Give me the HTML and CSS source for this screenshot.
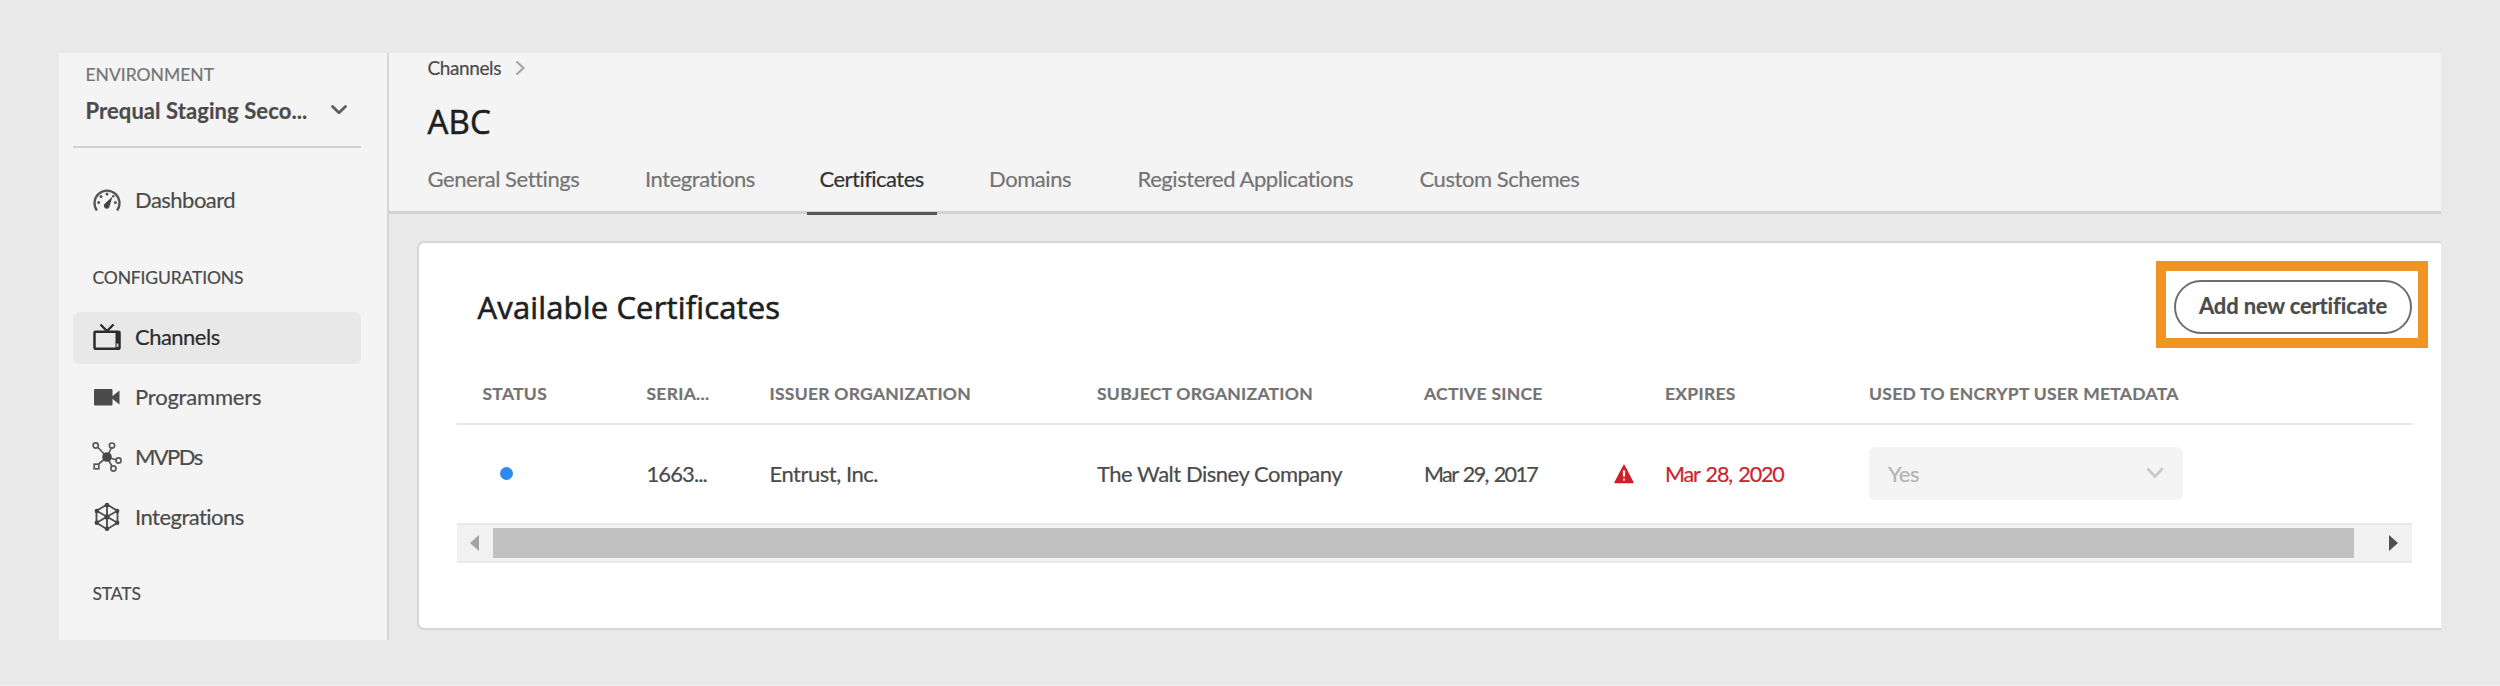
FILE: index.html
```html
<!DOCTYPE html>
<html lang="en">
<head>
<meta charset="utf-8">
<title>Certificates</title>
<link rel="stylesheet" href="styles.css">
</head>
<body>
<div class="app">
  <aside class="sidebar">
    <div class="env">
      <div class="env-label">ENVIRONMENT</div>
      <div class="env-select">
        <span class="env-name">Prequal Staging Seco...</span>
        <svg class="env-chevron" width="18" height="12" viewBox="0 0 18 12"><path d="M2.500 2.500 9 8.800 15.500 2.500" fill="none" stroke="#5c5c5c" stroke-width="2.800" stroke-linecap="round" stroke-linejoin="round"/></svg>
      </div>
    </div>
    <nav class="nav">
      <a class="item dashboard">
        <svg class="icon" width="30" height="30" viewBox="0 0 30 30"><path d="M4.900 25.500A12.500 12.500 0 1 1 25.100 25.500" fill="none" stroke="#555" stroke-width="2.300"/><path d="M20.500 11.500 17.600 21.300A2.900 2.900 0 1 1 13 18.500Z" fill="#444"/><g fill="#555"><circle cx="15" cy="9" r="1.500"/><circle cx="9" cy="11.500" r="1.500"/><circle cx="6.600" cy="17.500" r="1.500"/><circle cx="23.400" cy="17.500" r="1.500"/><circle cx="21.300" cy="11.200" r="1.300"/></g></svg>
        <span>Dashboard</span>
      </a>
      <div class="group configurations">CONFIGURATIONS</div>
      <a class="item active">
        <svg class="icon" width="30" height="30" viewBox="0 0 30 30"><path d="M8.500 2.500 15 9l6.500-6.500" fill="none" stroke="#2c2c2c" stroke-width="2.300"/><rect x="2.500" y="9.800" width="25" height="17" rx="1" fill="none" stroke="#2c2c2c" stroke-width="2.500"/><path d="M23.500 9.500H28v18h-4.500z" fill="#2c2c2c"/><path d="M24.600 21.500h1.800v3.500h-1.800z" fill="#d8d8d8"/></svg>
        <span>Channels</span>
      </a>
      <a class="item programmers">
        <svg class="icon" width="30" height="30" viewBox="0 0 30 30"><rect x="2" y="7" width="18.500" height="16.500" rx="1" fill="#4b4b4b"/><path d="M20 14.500 27.500 8.500V22.500L20 16.500Z" fill="#4b4b4b"/></svg>
        <span>Programmers</span>
      </a>
      <a class="item mvpds">
        <svg class="icon" width="30" height="30" viewBox="0 0 30 30"><g fill="none" stroke="#5a5a5a" stroke-width="1.700"><path d="M15 15 5.500 5M15 15 19.300 6M15 15 24.500 18M15 15 6 22.500M15 15 20 24.500"/><g fill="#f4f4f4"><circle cx="3.700" cy="3.500" r="2.600"/><circle cx="20" cy="3.600" r="2.600"/><circle cx="26.500" cy="18.500" r="2.600"/><circle cx="21.400" cy="26.500" r="2.600"/><rect x="2.200" y="22.200" width="4.600" height="4.600"/></g></g><circle cx="15" cy="15" r="4.800" fill="#484848"/></svg>
        <span>MVPDs</span>
      </a>
      <a class="item integrations">
        <svg class="icon" width="30" height="30" viewBox="0 0 30 30"><path d="M15 2.500 25.500 8.800V20.800L15 27.200 4.500 20.800V8.800ZM15 2.500V27.200M4.500 8.800 25.500 20.800M25.500 8.800 4.500 20.800" fill="none" stroke="#505050" stroke-width="1.900"/><g fill="#444"><circle cx="15" cy="3" r="2.300"/><circle cx="25.200" cy="9" r="2.200"/><circle cx="25.200" cy="20.700" r="2.200"/><circle cx="15" cy="26.800" r="2.300"/><circle cx="4.800" cy="20.700" r="2.200"/><circle cx="4.800" cy="9" r="2.200"/><circle cx="15" cy="14.900" r="2.600"/></g></svg>
        <span>Integrations</span>
      </a>
      <div class="group stats">STATS</div>
      <a class="item clipped">
        <svg width="30" height="30" viewBox="0 0 30 30"><circle cx="23.500" cy="4" r="4" fill="#aaa"/></svg>
      </a>
    </nav>
  </aside>

  <main class="main">
    <header class="header">
      <div class="crumbs">
        <span>Channels</span>
        <svg width="11" height="16" viewBox="0 0 11 16"><path d="M2 2 8.500 8 2 14" fill="none" stroke="#a6a6a6" stroke-width="2.200" stroke-linecap="round"/></svg>
      </div>
      <h1 class="title">ABC</h1>
      <div class="tabs">
        <a class="tab">General Settings</a>
        <a class="tab">Integrations</a>
        <a class="tab selected">Certificates</a>
        <a class="tab">Domains</a>
        <a class="tab">Registered Applications</a>
        <a class="tab">Custom Schemes</a>
      </div>
    </header>

    <section class="card">
      <div class="card-head">
        <h2 class="card-title">Available Certificates</h2>
        <div class="add-wrap">
          <button class="add">Add new certificate</button>
          <div class="highlight"></div>
        </div>
      </div>
      <div class="table">
        <div class="row head">
          <span>STATUS</span><span>SERIA...</span><span>ISSUER ORGANIZATION</span><span>SUBJECT ORGANIZATION</span><span>ACTIVE SINCE</span><span></span><span>EXPIRES</span><span>USED TO ENCRYPT USER METADATA</span>
        </div>
        <div class="row body">
          <span class="dot"></span>
          <span class="serial">1663...</span>
          <span>Entrust, Inc.</span>
          <span>The Walt Disney Company</span>
          <span class="date">Mar 29, 2017</span>
          <svg class="warning" width="20" height="20" viewBox="0 0 20 20"><path d="M10 1.300 19 18.500H1Z" fill="#cb2129" stroke="#cb2129" stroke-width="1.400" stroke-linejoin="round"/><path d="M10 6.500v6" stroke="#fff" stroke-width="2.200"/><path d="M10 14.500v2.200" stroke="#f3b9bb" stroke-width="2.200"/></svg>
          <span class="date expired">Mar 28, 2020</span>
          <div class="select"><span>Yes</span><svg width="18" height="13" viewBox="0 0 18 13"><path d="M2 2 9 9.500 16 2" fill="none" stroke="#cacaca" stroke-width="2.600" stroke-linecap="round"/></svg></div>
        </div>
        <div class="scrollbar">
          <svg width="36" height="30" viewBox="0 0 36 30"><path d="M13 15 22 7V23Z" fill="#a3a3a3"/></svg>
          <div class="thumb"></div>
          <svg width="58" height="30" viewBox="0 0 58 30"><path d="M44 15 35 7V23Z" fill="#505050"/></svg>
        </div>
      </div>
    </section>
  </main>
</div>
</body>
</html>
```
FILE: styles.css
```css
* { box-sizing: border-box; }

body {
  margin: 0;
  height: 686px;
  padding: 53px 59px 0;
  background: #e9e9e9;
  border-bottom: 1px solid #f1f1f1;
  font-family: Lato, "Open Sans", sans-serif;
  font-size: 22px;
  letter-spacing: -0.480px;
  color: #4b4b4b;
  -webkit-text-stroke: 0.200px currentColor;
  overflow: hidden;
}

svg { display: block; flex: none; }

.app {
  display: flex;
  width: 2382px;
  height: 587px;
  overflow: hidden;
}

/* Sidebar */
.sidebar {
  flex: none;
  width: 330px;
  padding: 9px 26px 0 13.500px;
  background: #f4f4f4;
  border-right: 2px solid #d6d6d6;
}

.env {
  height: 85.500px;
  padding: 0 13.500px 0 13px;
  border-bottom: 2px solid #d2d2d2;
}
.env-label {
  padding-top: 1px;
  font-size: 17.500px;
  line-height: 24px;
  letter-spacing: 0;
  color: #747474;
}
.env-select {
  display: flex;
  justify-content: space-between;
  align-items: center;
  margin-top: 8px;
}
.env-name {
  line-height: 32px;
  font-weight: 700;
  letter-spacing: 0.080px;
}
.env-chevron { margin-bottom: 3px; }

.item {
  display: flex;
  align-items: center;
  gap: 13.500px;
  height: 52px;
  margin-bottom: 8px;
  padding: 0 0 3px 19px;
  border-radius: 6px;
  letter-spacing: -0.520px;
}
.item.dashboard { margin: 27.500px 0 39px; }
.item.active { background: #e8e8e8; color: #2c2c2c; }
.item.programmers { letter-spacing: -0.200px; }
.item.mvpds { letter-spacing: -1.600px; }
.item.integrations { margin-bottom: 38px; }

.group {
  padding-left: 20px;
  font-size: 17.500px;
  line-height: 24px;
  letter-spacing: -0.150px;
}
.configurations { margin-bottom: 22px; }
.stats { margin-bottom: 33.500px; }
.clipped { height: 30px; padding-bottom: 0; align-items: flex-start; }

/* Header */
.main { flex: 1; min-width: 0; }
.header {
  height: 161px;
  padding: 3px 0 0 38.500px;
  background: #f4f4f4;
  border-bottom: 3px solid #d2d2d2;
}
.crumbs {
  display: flex;
  align-items: center;
  gap: 14px;
  font-size: 19px;
  line-height: 24px;
  letter-spacing: -0.400px;
}
.title {
  margin: 21.500px 0 0;
  font: 500 33px/40px "Open Sans", sans-serif;
  letter-spacing: 0.200px;
  -webkit-text-stroke: 0.600px currentColor;
  color: #1f1f1f;
}
.tabs {
  display: grid;
  grid-template-columns: 217.500px 174.500px 169.500px 148.500px 282px 200px;
  justify-items: start;
  margin: 22px 0 0 -13px;
}
.tab {
  height: 51px;
  padding: 0 13px;
  line-height: 29px;
  letter-spacing: -0.430px;
  color: #747474;
  white-space: nowrap;
}
.tab.selected {
  color: #323232;
  letter-spacing: -0.520px;
  border-bottom: 3px solid #595959;
}

/* Certificates card */
.card {
  height: 389px;
  margin: 27px 0 0 28px;
  padding: 37px 29px 0 38px;
  background: #fff;
  border: 2px solid #d6d6d6;
  border-right: 0;
  border-radius: 7px 0 0 7px;
}
.card-head {
  display: flex;
  justify-content: space-between;
  height: 101px;
  padding-left: 20.500px;
}
.card-title {
  margin: 7px 0 0;
  font: 500 31px/40px "Open Sans", sans-serif;
  letter-spacing: 0.150px;
  -webkit-text-stroke: 0.600px currentColor;
  color: #1f1f1f;
}
.add-wrap { position: relative; width: 238px; height: 54px; }
.add {
  width: 100%;
  height: 100%;
  padding: 0 0 4px;
  border: 2px solid #6e6e6e;
  border-radius: 27px;
  background: #fff;
  color: #4b4b4b;
  font: 700 22px Lato, sans-serif;
  letter-spacing: -0.150px;
}
.highlight {
  position: absolute;
  inset: -19px -16px -14px -18px;
  border: 10px solid #f29423;
}

.row {
  display: grid;
  grid-template-columns: 164px 123px 327.500px 327px 190px 51px 204px 1fr;
  padding-left: 25.500px;
  white-space: nowrap;
}
.head {
  height: 44px;
  padding-top: 1px;
  border-bottom: 2px solid #e6e6e6;
  font-size: 17.500px;
  line-height: 24px;
  font-weight: 700;
  letter-spacing: 0.270px;
  color: #747474;
}
.body {
  height: 97.500px;
  align-items: center;
  line-height: 30px;
}
.dot {
  width: 13px;
  height: 13px;
  margin-left: 17.500px;
  border-radius: 50%;
  background: #2d8bf0;
}
.serial { letter-spacing: -0.900px; }
.date { font-size: 21.500px; letter-spacing: -1.600px; word-spacing: 2px; }
.expired { color: #c9252d; letter-spacing: -1.150px; }
.select {
  display: flex;
  justify-content: space-between;
  align-items: center;
  width: 314px;
  height: 53px;
  padding: 0 19px;
  border-radius: 6px;
  background: #f4f4f4;
  color: #b3b3b3;
}

.scrollbar {
  display: flex;
  align-items: center;
  height: 40px;
  background: #f1f1f1;
  border: solid #e9e9e9;
  border-width: 2px 0;
}
.thumb { flex: 1; height: 30px; background: #c1c1c1; }
```
